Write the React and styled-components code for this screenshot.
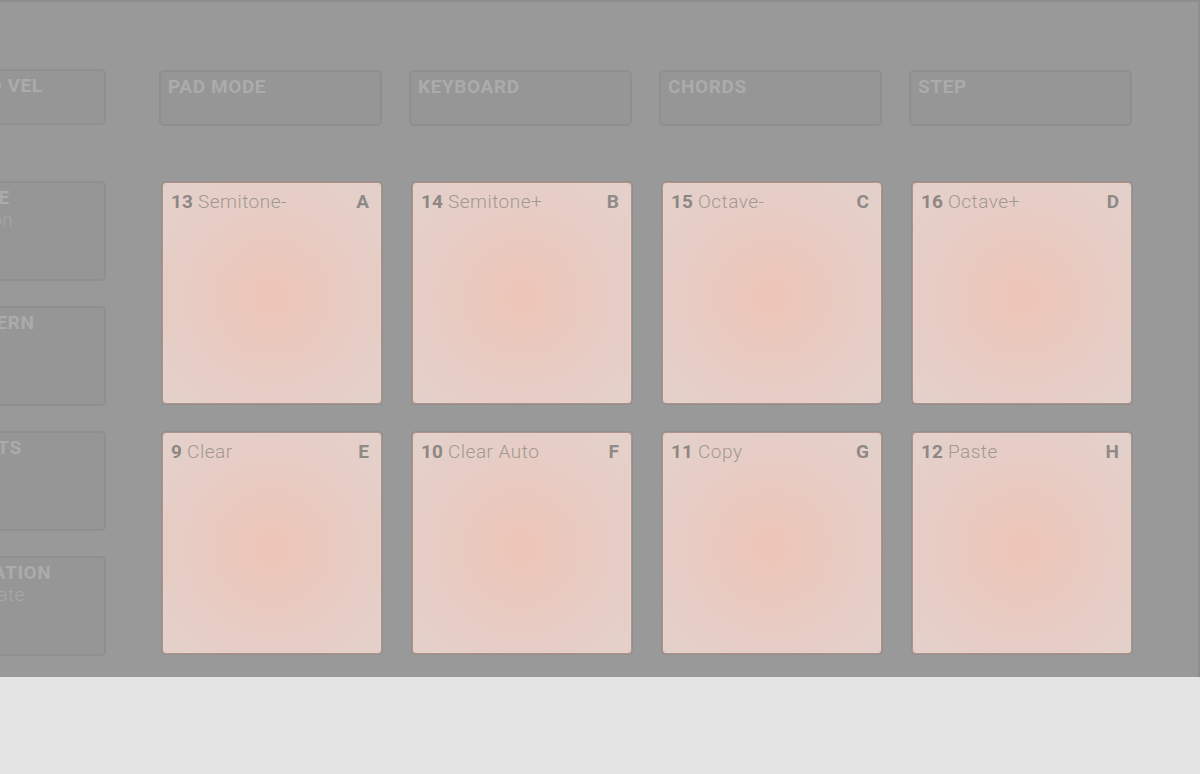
import React from 'react';
import styled, { createGlobalStyle } from 'styled-components';

const GlobalStyle = createGlobalStyle`
  html, body {
    margin: 0;
    padding: 0;
    background: #e4e4e4;
  }
  body {
    font-family: Roboto, "Liberation Sans", sans-serif;
  }
`;

const Page = styled.div`
  display: flex;
  flex-direction: column;
  width: 1200px;
  height: 774px;
  overflow: hidden;
`;

const Panel = styled.section`
  box-sizing: border-box;
  flex: 0 0 677px;
  padding-top: 67px;
  background: #999999;
  border-top: 2px solid #8e8e8e;
  border-right: 2px solid #8e8e8e;
  display: flex;
  align-items: flex-start;
  overflow: hidden;
`;

const Footer = styled.div`
  flex: 1;
  background: #e4e4e4;
`;

const LeftColumn = styled.div`
  flex: 0 0 167px;
  margin-left: -61px;
  display: flex;
  flex-direction: column;
`;

const Main = styled.div`
  margin-left: 53px;
  display: flex;
  flex-direction: column;
`;

// dark grey hardware buttons (mode row + side column)
const HwButton = styled.div`
  box-sizing: border-box;
  flex-shrink: 0;
  height: ${(p) => (p.tall ? '100px' : '56px')};
  margin-bottom: ${(p) => p.gapBelow || 0}px;
  padding: 4px 7px 0;
  background: #969696;
  border: 2px solid #8f8f8f;
  border-radius: 5px;
  display: flex;
  flex-direction: column;
  line-height: 22px;
`;

const HwLabel = styled.span`
  font-size: 19px;
  font-weight: 700;
  letter-spacing: 0.6px;
  color: #ababab;
  white-space: nowrap;
`;

const HwSub = styled.span`
  font-size: 19px;
  font-weight: 300;
  letter-spacing: 0.4px;
  color: #a7a7a7;
  white-space: nowrap;
`;

const ModeRow = styled.div`
  display: grid;
  grid-template-columns: repeat(4, 223px);
  column-gap: 27px;
  margin-top: 1px;
`;

const PadGrid = styled.div`
  display: grid;
  grid-template-columns: repeat(4, 220px);
  grid-auto-rows: 222px;
  column-gap: 30px;
  row-gap: 28px;
  margin-top: 56px;
  padding-left: 3px;
`;

const Pad = styled.div`
  box-sizing: border-box;
  padding: 8px 12px 0 8px;
  border: 1px solid #b0938b;
  border-radius: 4px;
  box-shadow: 0 0 0 1px rgba(130, 100, 90, 0.18);
  background: radial-gradient(
    circle at 50% 52%,
    #eec5b7 0%,
    #eac9be 30%,
    #e6cdc5 60%,
    #e4d0ca 90%
  );
  display: flex;
  justify-content: space-between;
  align-items: flex-start;
  line-height: 22px;
  font-size: 19px;
`;

const PadTitle = styled.span`
  color: #a39892;
  font-weight: 300;
  letter-spacing: 0.5px;
  white-space: nowrap;

  b {
    font-weight: 700;
    letter-spacing: 0;
    color: #8e8784;
  }
`;

const PadKey = styled.span`
  font-weight: 700;
  color: #8f8a88;
`;

const modes = ['PAD MODE', 'KEYBOARD', 'CHORDS', 'STEP'];

const sideButtons = [
  { label: 'SCENE', sub: 'Section' },
  { label: 'PATTERN' },
  { label: 'EVENTS' },
  { label: 'VARIATION', sub: 'Navigate' },
];

const pads = [
  { n: 13, name: 'Semitone-', key: 'A' },
  { n: 14, name: 'Semitone+', key: 'B' },
  { n: 15, name: 'Octave-', key: 'C' },
  { n: 16, name: 'Octave+', key: 'D' },
  { n: 9, name: 'Clear', key: 'E' },
  { n: 10, name: 'Clear Auto', key: 'F' },
  { n: 11, name: 'Copy', key: 'G' },
  { n: 12, name: 'Paste', key: 'H' },
];

export default function App() {
  return (
    <>
      <GlobalStyle />
      <Page>
        <Panel>
          <LeftColumn>
            <HwButton gapBelow={56}>
              <HwLabel>FIXED VEL</HwLabel>
            </HwButton>
            {sideButtons.map((b) => (
              <HwButton key={b.label} tall gapBelow={25}>
                <HwLabel>{b.label}</HwLabel>
                {b.sub && <HwSub>{b.sub}</HwSub>}
              </HwButton>
            ))}
          </LeftColumn>

          <Main>
            <ModeRow>
              {modes.map((m) => (
                <HwButton key={m}>
                  <HwLabel>{m}</HwLabel>
                </HwButton>
              ))}
            </ModeRow>

            <PadGrid>
              {pads.map((p) => (
                <Pad key={p.key}>
                  <PadTitle>
                    <b>{p.n}</b> {p.name}
                  </PadTitle>
                  <PadKey>{p.key}</PadKey>
                </Pad>
              ))}
            </PadGrid>
          </Main>
        </Panel>
        <Footer />
      </Page>
    </>
  );
}
